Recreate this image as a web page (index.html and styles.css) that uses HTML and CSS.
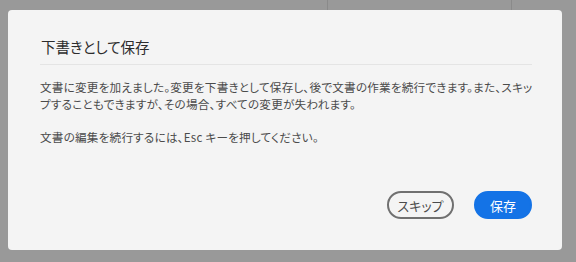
FILE: index.html
```html
<!DOCTYPE html>
<html lang="ja">
<head>
<meta charset="utf-8">
<link rel="stylesheet" href="styles.css">
</head>
<body>
<div class="backdrop">
  <div class="dialog">
    <h2 class="title">下書きとして保存</h2>
    <div class="content">
      <p>文書に変更を加えました。変更を下書きとして保存し、後で文書の作業を続行できます。また、スキッ<br>プすることもできますが、その場合、すべての変更が失われます。</p>
      <p>文書の編集を続行するには、Esc キーを押してください。</p>
    </div>
    <div class="footer">
      <button class="btn btn-secondary">スキップ</button>
      <button class="btn btn-primary">保存</button>
    </div>
  </div>
</div>
</body>
</html>
```

FILE: styles.css
```css
html, body {
  margin: 0;
  padding: 0;
}
body {
  width: 576px;
  height: 262px;
  background-color: #999999;
  background-image:
    linear-gradient(#8a8a8a, #8a8a8a),
    linear-gradient(#8a8a8a, #8a8a8a);
  background-size: 1px 12px, 1px 12px;
  background-position: 327px 0, 511px 0;
  background-repeat: no-repeat;
  font-family: "Noto Sans CJK JP", "Noto Sans", sans-serif;
  overflow: hidden;
}
.backdrop {
  padding: 10px 0 0 8px;
}
.dialog {
  width: 554px;
  height: 240px;
  box-sizing: border-box;
  background: #f4f4f4;
  border-radius: 4px;
  padding: 0 30px 0 32px;
  display: flex;
  flex-direction: column;
}
.title {
  margin: 0;
  padding: 27px 0 7px 1px;
  font-size: 14.5px;
  line-height: 20px;
  font-weight: normal;
  color: #2c2c2c;
  border-bottom: 1px solid #e4e4e4;
  font-feature-settings: "palt";
}
.content {
  padding-top: 14px;
  font-size: 11.6px;
  line-height: 17px;
  letter-spacing: 0.22px;
  color: #4b4b4b;
  font-feature-settings: "palt";
  white-space: nowrap;
}
.content p {
  margin: 0 0 16px;
}
.footer {
  margin-top: auto;
  padding-bottom: 31px;
  display: flex;
  justify-content: flex-end;
  gap: 20px;
}
.btn {
  font-family: inherit;
  font-size: 13px;
  height: 28px;
  border-radius: 14px;
  padding: 0;
  box-sizing: border-box;
  font-feature-settings: "palt";
  line-height: 1;
}
.btn-secondary {
  background: transparent;
  border: 2px solid #707070;
  color: #4b4b4b;
  width: 67px;
}
.btn-primary {
  background: #1473e6;
  border: 2px solid #1473e6;
  color: #ffffff;
  width: 58px;
}
```
